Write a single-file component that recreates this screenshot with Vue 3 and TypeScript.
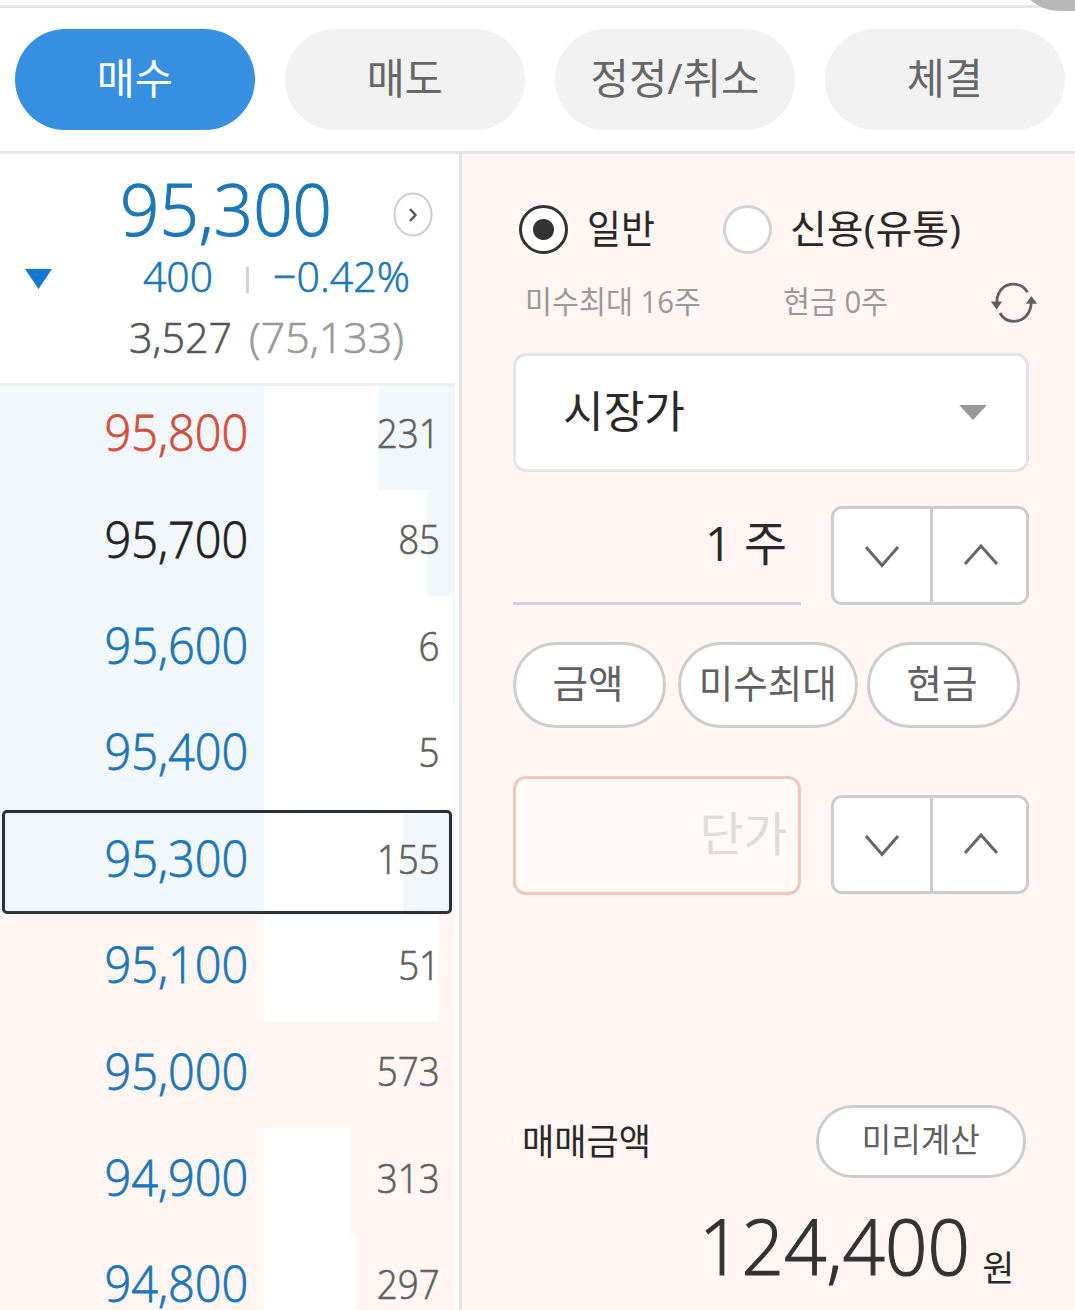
<script setup lang="ts">
import { ref } from 'vue'

type Side = 'ask' | 'bid'
type Tone = 'up' | 'flat' | 'down'

interface Quote {
  price: string
  amount: string
  side: Side
  tone: Tone
  bar: number
  current?: boolean
}

const tabs = [
  { label: '매수', width: 76 },
  { label: '매도', width: 76 },
  { label: '정정/취소', width: 169 },
  { label: '체결', width: 76 },
]
const activeTab = ref('매수')

const quotes: Quote[] = [
  { price: '95,800', amount: '231', side: 'ask', tone: 'up', bar: 77 },
  { price: '95,700', amount: '85', side: 'ask', tone: 'flat', bar: 28 },
  { price: '95,600', amount: '6', side: 'ask', tone: 'down', bar: 2 },
  { price: '95,400', amount: '5', side: 'ask', tone: 'down', bar: 1 },
  { price: '95,300', amount: '155', side: 'ask', tone: 'down', bar: 52, current: true },
  { price: '95,100', amount: '51', side: 'bid', tone: 'down', bar: 17 },
  { price: '95,000', amount: '573', side: 'bid', tone: 'down', bar: 191 },
  { price: '94,900', amount: '313', side: 'bid', tone: 'down', bar: 105 },
  { price: '94,800', amount: '297', side: 'bid', tone: 'down', bar: 99 },
]

const quickAmounts = [
  { label: '금액', width: 71, box: 153 },
  { label: '미수최대', width: 138, box: 180 },
  { label: '현금', width: 71, box: 153 },
]

// Condenses a label horizontally to the given advance width.
const vFit = {
  mounted(el: HTMLElement, binding: { value: number }) {
    const natural = el.getBoundingClientRect().width
    el.style.transform = `scaleX(${binding.value / natural})`
  },
}
</script>

<template>
  <main class="screen">
    <div class="floating" />
    <nav class="tabs">
      <button
        v-for="tab in tabs"
        :key="tab.label"
        class="tab"
        :class="{ active: tab.label === activeTab }"
        @click="activeTab = tab.label"
      >
        <span v-fit="tab.width" class="t">{{ tab.label }}</span>
      </button>
    </nav>

    <div class="body">
      <section class="book">
        <header class="summary">
          <div class="row last">
            <span v-fit="212" class="t left thin">95,300</span>
            <svg class="more" width="40" height="45" viewBox="0 0 40 45">
              <ellipse cx="20" cy="22.5" rx="18.6" ry="21" fill="#fff" stroke="#cdcdcd" stroke-width="2" />
              <path d="M17 17l5.5 6-5.5 6" fill="none" stroke="#555" stroke-width="2.4" />
            </svg>
          </div>
          <div class="row change">
            <svg class="fall" width="27" height="20" viewBox="0 0 27 20"><path d="M0 0h27L13.5 20z" fill="#1478d4" /></svg>
            <span class="slot amount"><span v-fit="70" class="t left thin">400</span></span>
            <i class="bar" />
            <span v-fit="137" class="t left thin">−0.42%</span>
          </div>
          <div class="row volume">
            <span class="slot traded"><span v-fit="103" class="t left thin">3,527</span></span>
            <span v-fit="155" class="t left total thin">(75,133)</span>
          </div>
        </header>

        <ul class="quotes">
          <li v-for="q in quotes" :key="q.price" class="quote" :class="[q.side, { current: q.current }]">
            <span class="price" :class="q.tone"><span v-fit="144" class="t right thin">{{ q.price }}</span></span>
            <span class="depth">
              <i class="fill" :style="{ width: q.bar + 'px' }" />
              <span class="t num thin">{{ q.amount }}</span>
            </span>
          </li>
        </ul>
      </section>

      <section class="order">
        <div class="kinds">
          <i class="radio on" />
          <span class="slot kind-a"><span v-fit="68" class="t left">일반</span></span>
          <i class="radio" />
          <span class="slot kind-b"><span v-fit="171" class="t left">신용(유통)</span></span>
        </div>

        <div class="limits">
          <span class="slot limit-a"><span v-fit="176" class="t left">미수최대 16주</span></span>
          <span v-fit="105" class="t left">현금 0주</span>
          <svg class="refresh" width="48" height="44" viewBox="0 0 48 44" fill="none" stroke="#606060" stroke-width="2.8">
            <path d="M6.8 23C6.5 10 14 3.2 23.5 3.2c6 0 11 3 14 8" />
            <path d="M41.2 20c.3 13-8 20.300-17.500 20.300-6 0-11-3.300-13.800-8.300" />
            <path d="M.8 20.500h11.400L6.600 28.500zM35.800 22.800h11.400L41.300 15z" fill="#606060" stroke="none" />
          </svg>
        </div>

        <div class="select">
          <span v-fit="122" class="t left">시장가</span>
          <svg width="28" height="15" viewBox="0 0 28 15"><path d="M0 0h28L14 15z" fill="#999" /></svg>
        </div>

        <div class="entry qty">
          <div class="line"><span v-fit="82" class="t right">1 주</span></div>
          <div class="stepper">
            <button><svg width="36" height="24" viewBox="0 0 36 24"><path d="M2 2l16 18.500L34 2" /></svg></button>
            <button><svg width="36" height="24" viewBox="0 0 36 24"><path d="M2 21L18 3l16 18" /></svg></button>
          </div>
        </div>

        <div class="quick">
          <button v-for="item in quickAmounts" :key="item.label" class="pill" :style="{ width: item.box + 'px' }">
            <span v-fit="item.width" class="t">{{ item.label }}</span>
          </button>
        </div>

        <div class="entry unit">
          <div class="field"><span v-fit="88" class="t right">단가</span></div>
          <div class="stepper">
            <button><svg width="36" height="24" viewBox="0 0 36 24"><path d="M2 2l16 18.500L34 2" /></svg></button>
            <button><svg width="36" height="24" viewBox="0 0 36 24"><path d="M2 21L18 3l16 18" /></svg></button>
          </div>
        </div>

        <footer class="sum">
          <div class="sum-head">
            <span v-fit="129" class="t left">매매금액</span>
            <button class="pill calc"><span v-fit="118" class="t">미리계산</span></button>
          </div>
          <div class="sum-value">
            <span v-fit="271" class="t right value thin">124,400</span>
            <span v-fit="32" class="t right won">원</span>
          </div>
        </footer>
      </section>
    </div>
  </main>
</template>

<style>
html,
body {
  margin: 0;
  overflow: hidden;
}
</style>

<style scoped>
* {
  box-sizing: border-box;
}
.screen {
  position: relative;
  width: 1075px;
  height: 1310px;
  overflow: hidden;
  padding-top: 5px;
  background: #fff;
  color: #2a2727;
  font-family: 'Open Sans', 'Noto Sans CJK KR', sans-serif;
}
.floating {
  position: absolute;
  top: -81px;
  left: 1014px;
  width: 160px;
  height: 92px;
  border-radius: 46px;
  background: #b8b8b8;
}
.t {
  display: inline-block;
  flex: none;
  white-space: pre;
  line-height: 1;
}
.thin {
  font-weight: 300;
  -webkit-text-stroke: 0.016em currentColor;
}
.slot {
  display: flex;
  flex: none;
}
.left {
  transform-origin: left center;
}
.right {
  transform-origin: right center;
}
.num {
  transform: scaleX(0.93);
  transform-origin: right center;
}
button {
  display: flex;
  align-items: center;
  justify-content: center;
  padding: 0;
  border: 0;
  background: none;
  font: inherit;
  color: inherit;
}
.tabs {
  display: flex;
  gap: 30px;
  height: 149px;
  padding: 21px 10px 0 15px;
  border-top: 3px solid #e5e5e5;
  border-bottom: 3px solid #e5e5e5;
}
.tab {
  width: 240px;
  height: 101px;
  padding-bottom: 3px;
  border-radius: 51px;
  background: #f1f1f1;
  color: #666;
  font-size: 42px;
}
.tab.active {
  background: #368fe0;
  color: #fff;
}
.body {
  display: flex;
  height: 1156px;
}
.book {
  width: 462px;
  flex: none;
  border-right: 3px solid #e5e5e5;
}
.summary {
  width: 455px;
  height: 232px;
  border-bottom: 3px solid #efefef;
}
.row {
  display: flex;
  align-items: center;
  color: #1c76b8;
}
.last {
  height: 107px;
  padding-left: 120px;
  font-size: 72px;
}
.more {
  margin-left: auto;
  margin-right: 22px;
  margin-top: 14px;
}
.change {
  height: 28px;
  padding-left: 25px;
  font-size: 43px;
}
.fall {
  margin-top: 8px;
}
.amount {
  width: 103px;
  margin-left: 91px;
}
.bar {
  width: 3px;
  height: 26px;
  margin: 10px 24px 0 0;
  background: #d2d2d2;
}
.volume {
  height: 96px;
  padding-left: 129px;
  font-size: 42px;
}
.traded {
  width: 120px;
  color: #555;
}
.total {
  color: #999;
}
.quotes {
  width: 455px;
  margin: -3.500px 0 0;
  padding: 0;
  list-style: none;
}
.quote {
  position: relative;
  display: flex;
  height: 106.400px;
}
.quote:first-child {
  height: 107px;
  border-top: 3.500px solid #efefef;
}
.price,
.depth {
  display: flex;
  align-items: center;
  justify-content: flex-end;
}
.price {
  width: 264px;
  padding: 0 16px 7px 0;
  font-size: 49px;
}
.depth {
  position: relative;
  width: 191px;
  padding: 0 15px 5px 0;
  background: #fff;
  color: #606060;
  font-size: 39.500px;
}
.quote:first-child .price {
  padding-bottom: 10px;
}
.quote:first-child .depth {
  padding-bottom: 8px;
}
.depth .num {
  position: relative;
}
.fill {
  position: absolute;
  top: 0;
  right: 0;
  bottom: 0;
}
.ask .price,
.ask .fill {
  background: #f2f7fb;
}
.bid .price,
.bid .fill {
  background: #fff5f2;
}
.price.up {
  color: #d2503c;
}
.price.flat {
  color: #222;
}
.price.down {
  color: #1c76b8;
}
.current::after {
  content: '';
  position: absolute;
  inset: 1px 3px 1px 2px;
  border: 3px solid #2d3133;
  border-radius: 5px;
}
.order {
  width: 613px;
  background: #fff5f2;
  padding-left: 51px;
}
.kinds {
  display: flex;
  align-items: center;
  height: 151px;
  padding-left: 6px;
  font-size: 39px;
}
.kinds .t {
  margin-top: -5px;
}
.radio {
  width: 49px;
  height: 49px;
  border: 3px solid #d3d3d3;
  border-radius: 50%;
  background: #fff;
}
.radio.on {
  border-color: #333;
  background: radial-gradient(circle, #333 10px, #fff 11px);
}
.kind-a {
  width: 136px;
  margin-left: 19px;
}
.kind-b {
  margin-left: 18px;
}
.limits {
  display: flex;
  align-items: center;
  height: 48px;
  margin-top: -28px;
  padding-left: 12px;
  color: #999;
  font-size: 31px;
}
.limit-a {
  width: 258px;
}
.refresh {
  margin: 3px 37px 0 auto;
}
.select {
  display: flex;
  align-items: center;
  justify-content: space-between;
  width: 516px;
  height: 119px;
  margin-top: 28px;
  padding: 0 39px 4px 47px;
  border: 3px solid #e5e5e5;
  border-radius: 13px;
  background: #fff;
  font-size: 44px;
}
.select svg {
  margin-top: 3px;
}
.entry {
  display: flex;
  justify-content: space-between;
  width: 516px;
}
.qty {
  margin-top: 34px;
}
.line {
  display: flex;
  align-items: center;
  justify-content: flex-end;
  width: 288px;
  padding: 0 14px 23px 0;
  border-bottom: 3px solid #d2d2d2;
  font-size: 48px;
}
.stepper {
  display: flex;
  width: 198px;
  height: 99px;
  border: 3px solid #ccc;
  border-radius: 11px;
  background: #fff;
}
.stepper button {
  flex: 1;
  padding: 0 0 2px 2px;
}
.stepper button:first-child {
  flex: 0 0 99px;
  border-right: 3px solid #ccc;
  padding: 3px 0 0;
}
.stepper svg {
  fill: none;
  stroke: #666;
  stroke-width: 3;
}
.quick {
  display: flex;
  gap: 9px;
  margin-top: 37px;
}
.pill:first-child {
  margin-right: 3px;
}
.pill {
  height: 86px;
  padding-bottom: 5px;
  border: 3px solid #cdcdcd;
  border-radius: 43px;
  background: #fff;
  color: #606060;
  font-size: 39px;
}
.quick .pill:not(:nth-child(2)) {
  padding-right: 3px;
}
.unit {
  margin-top: 48px;
  align-items: flex-end;
}
.field {
  display: flex;
  align-items: center;
  justify-content: flex-end;
  width: 288px;
  height: 119px;
  padding: 0 11px 4px 0;
  border: 3px solid #efc7c0;
  border-radius: 13px;
  background: #fffaf7;
  color: #dfdbda;
  font-size: 47px;
}
.unit .stepper {
  margin-bottom: 1px;
}
.sum {
  width: 513px;
  margin-top: 210px;
}
.sum-head {
  display: flex;
  align-items: center;
  justify-content: space-between;
  padding-left: 9px;
  font-size: 36px;
}
.calc {
  width: 210px;
  height: 73px;
  font-size: 33px;
}
.sum-value {
  display: flex;
  align-items: center;
  justify-content: flex-end;
  height: 130px;
  padding: 4px 12px 0 0;
}
.value {
  color: #333;
  font-size: 78px;
}
.won {
  margin: 45px 0 0 12px;
  font-size: 35px;
}
</style>
